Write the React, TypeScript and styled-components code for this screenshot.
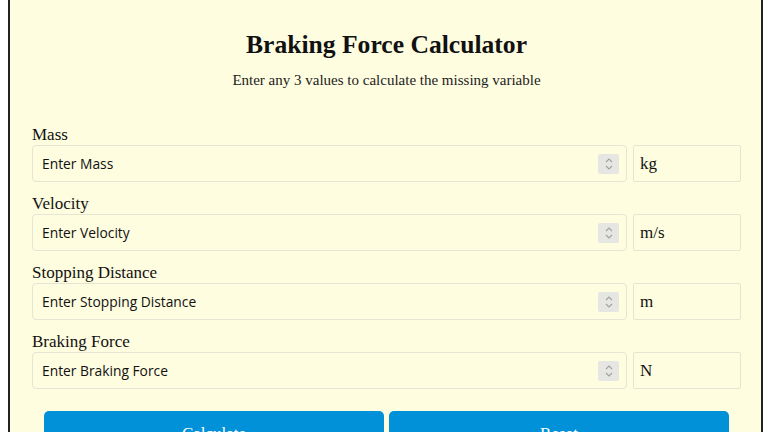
import styled, {createGlobalStyle} from "styled-components";

const GlobalStyle = createGlobalStyle`
 body {
  margin: 0 5px 0 8px;
  background: #fff;
  font-family: "Liberation Serif", "Times New Roman", serif;
  overflow: hidden;
 }
`;

type Field = {
 label: string;
 unit: string;
};

const fields: Field[] = [
 {label: "Mass", unit: "kg"},
 {label: "Velocity", unit: "m/s"},
 {label: "Stopping Distance", unit: "m"},
 {label: "Braking Force", unit: "N"},
];

const Spinner = () => (
 <SpinBox>
  <svg width="10" height="16" viewBox="0 0 10 16" fill="none" stroke="#a0a0a0" strokeWidth="1.1">
   <path d="M2 6 L5 3 L8 6" />
   <path d="M2 10 L5 13 L8 10" />
  </svg>
 </SpinBox>
);

const App = () => {
 return (
  <>
   <GlobalStyle />
   <Card>
    <Title>Braking Force Calculator</Title>
    <Subtitle>Enter any 3 values to calculate the missing variable</Subtitle>
    <Form onSubmit={e => e.preventDefault()}>
     {fields.map(f => (
      <Group key={f.label}>
       <Label>{f.label}</Label>
       <Row>
        <InputBox>
         <Input type="text" placeholder={`Enter ${f.label}`} />
         <Spinner />
        </InputBox>
        <Unit>{f.unit}</Unit>
       </Row>
      </Group>
     ))}
     <Buttons>
      <Button type="submit">Calculate</Button>
      <Button type="button">Reset</Button>
     </Buttons>
    </Form>
   </Card>
  </>
 );
};

export default App;

const Card = styled.div`
 background-color: #fffde0;
 border: 2px solid #222;
 border-top: none;
 padding: 30px 20px 22px 22px;
 min-height: 500px;
`;

const Title = styled.h2`
 margin: 0;
 font-size: 25.6px;
 line-height: 30px;
 font-weight: bold;
 text-align: center;
 color: #111;
`;

const Subtitle = styled.p`
 margin: 11px 0 0;
 font-size: 15px;
 line-height: 18px;
 text-align: center;
 color: #222;
`;

const Form = styled.form`
 margin-top: 36px;
 display: flex;
 flex-direction: column;
`;

const Group = styled.div`
 display: flex;
 flex-direction: column;
 margin-bottom: 12px;
`;

const Label = styled.label`
 font-size: 17px;
 line-height: 20px;
 color: #111;
`;

const Row = styled.div`
 display: flex;
 gap: 6px;
`;

const InputBox = styled.div`
 flex: 1;
 height: 37px;
 box-sizing: border-box;
 display: flex;
 align-items: center;
 border: 1.5px solid #e6e4d2;
 border-radius: 4px;
 padding: 0 7px 0 9px;
`;

const Input = styled.input`
 flex: 1;
 min-width: 0;
 border: none;
 outline: none;
 background: transparent;
 font-family: "Open Sans", "Noto Sans", sans-serif;
 font-size: 13.8px;
 color: #000;
 padding: 0;

 &::placeholder {
  color: #111;
 }
`;

const SpinBox = styled.div`
 width: 21px;
 height: 20px;
 background-color: #e6e6e3;
 border-radius: 2px;
 display: flex;
 align-items: center;
 justify-content: center;
`;

const Unit = styled.div`
 width: 108px;
 height: 37px;
 box-sizing: border-box;
 border: 1.5px solid #e6e4d2;
 border-radius: 2px;
 padding: 0 6px;
 display: flex;
 align-items: center;
 font-size: 17px;
 color: #111;
`;

const Buttons = styled.div`
 display: flex;
 gap: 5px;
 margin: 10px 12px 0;
`;

const Button = styled.button`
 flex: 1;
 height: 46px;
 border: none;
 border-radius: 5px;
 background-color: #0091d8;
 color: #fff;
 font-family: "Liberation Serif", "Times New Roman", serif;
 font-size: 17px;
 cursor: pointer;
`;
